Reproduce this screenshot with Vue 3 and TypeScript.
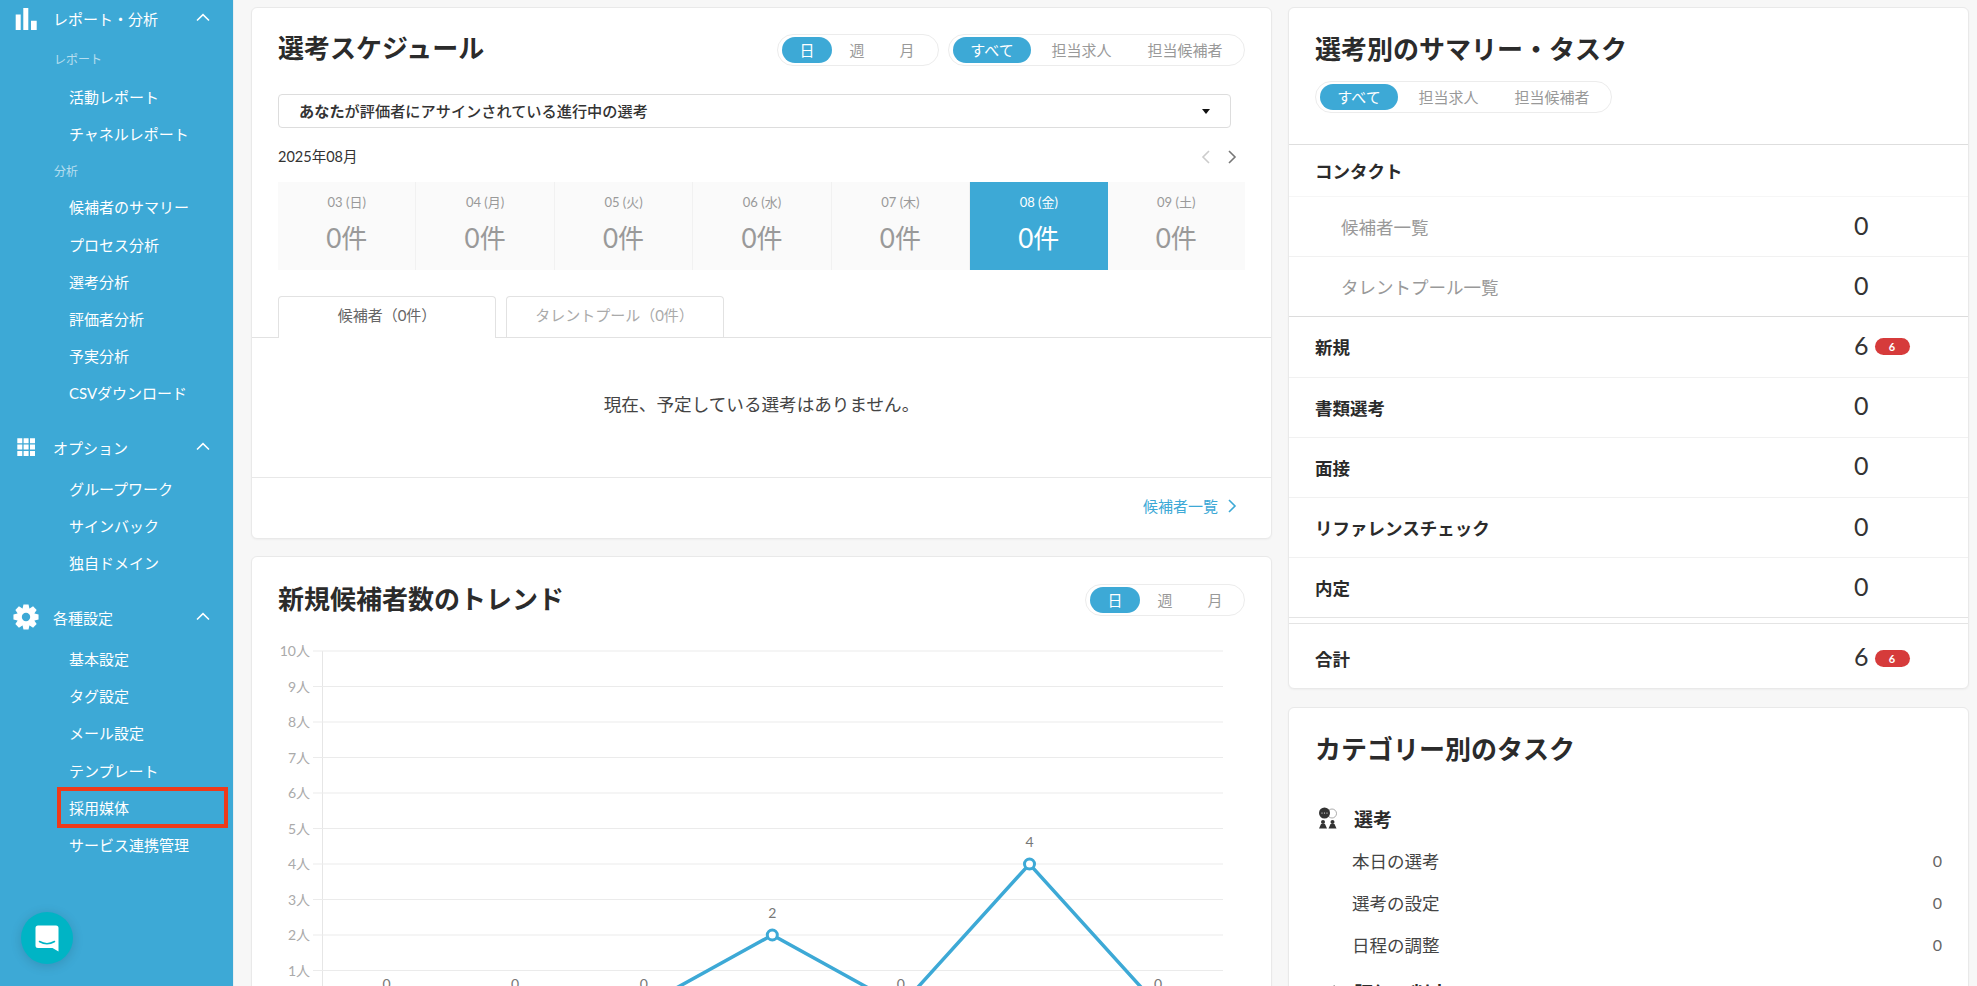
<script setup lang="ts">
interface Row { label: string; value: number; badge?: number }

const days = [
  { d: '03 (日)', n: '0件' }, { d: '04 (月)', n: '0件' }, { d: '05 (火)', n: '0件' },
  { d: '06 (水)', n: '0件' }, { d: '07 (木)', n: '0件' }, { d: '08 (金)', n: '0件', active: true },
  { d: '09 (土)', n: '0件' },
]
const analysis = ['候補者のサマリー', 'プロセス分析', '選考分析', '評価者分析', '予実分析', 'CSVダウンロード']
const options = ['グループワーク', 'サインバック', '独自ドメイン']
const settings = ['基本設定', 'タグ設定', 'メール設定', 'テンプレート', '採用媒体', 'サービス連携管理']
const stages: Row[] = [
  { label: '新規', value: 6, badge: 6 }, { label: '書類選考', value: 0 }, { label: '面接', value: 0 },
  { label: 'リファレンスチェック', value: 0 }, { label: '内定', value: 0 },
]
const tasks = [{ label: '本日の選考', v: 0 }, { label: '選考の設定', v: 0 }, { label: '日程の調整', v: 0 }]

// chart geometry, in the svg's own coordinates
const top = 34
const step = 35.5
const baseY = top + step * 10
const ticks = [10, 9, 8, 7, 6, 5, 4, 3, 2, 1].map((v) => ({ v, y: top + step * (10 - v) }))
const points = [0, 0, 0, 2, 0, 4, 0].map((v, i) => ({ v, x: 134.5 + i * 128.6, y: baseY - v * step }))
const linePath = points.map((p) => `${p.x},${p.y}`).join(' ')

const gearPts = (() => {
  const out: string[] = []
  const cx = 13, cy = 13
  for (let i = 0; i < 8; i++) {
    const a = (i * Math.PI) / 4 - Math.PI / 2
    const seq: [number, number][] = [[9.2, -0.38], [12.8, -0.2], [12.8, 0.2], [9.2, 0.38]]
    for (const [r, o] of seq) out.push(`${(cx + r * Math.cos(a + o)).toFixed(2)},${(cy + r * Math.sin(a + o)).toFixed(2)}`)
  }
  return out.join(' ')
})()
</script>

<template>
  <div class="page">
    <aside class="side">
      <div class="head">
        <svg class="ico" width="26" height="26" viewBox="0 0 26 26"><path d="M2.7 9.5h5v15.5h-5zM10.3 3h5v22h-5zM18 15.7h5.7V25H18z" fill="#fff"/></svg>
        <span>レポート・分析</span>
        <svg class="chev" width="14" height="9" viewBox="0 0 14 9"><path d="M1 7.5 7 1.7l6 5.8" fill="none" stroke="#fff" stroke-width="1.6"/></svg>
      </div>
      <div class="cap first">レポート</div>
      <div class="item">活動レポート</div>
      <div class="item">チャネルレポート</div>
      <div class="cap">分析</div>
      <div class="item" v-for="t in analysis" :key="t">{{ t }}</div>

      <div class="head gap">
        <svg class="ico" width="26" height="26" viewBox="0 0 26 26"><path d="M4.3 4.3h5v5h-5zM10.6 4.3h5v5h-5zM17 4.3h5v5h-5zM4.3 10.6h5v5h-5zM10.6 10.6h5v5h-5zM17 10.6h5v5h-5zM4.3 17h5v5h-5zM10.6 17h5v5h-5zM17 17h5v5h-5z" fill="#fff"/></svg>
        <span>オプション</span>
        <svg class="chev" width="14" height="9" viewBox="0 0 14 9"><path d="M1 7.5 7 1.7l6 5.8" fill="none" stroke="#fff" stroke-width="1.6"/></svg>
      </div>
      <div class="items">
        <div class="item" v-for="t in options" :key="t">{{ t }}</div>
      </div>

      <div class="head gap">
        <svg class="ico" width="26" height="26" viewBox="0 0 26 26"><polygon :points="gearPts" fill="#fff"/><circle cx="13" cy="13" r="4.2" fill="#3da9d6"/></svg>
        <span>各種設定</span>
        <svg class="chev" width="14" height="9" viewBox="0 0 14 9"><path d="M1 7.5 7 1.7l6 5.8" fill="none" stroke="#fff" stroke-width="1.6"/></svg>
      </div>
      <div class="items">
        <div class="item" :class="{ marked: t === '採用媒体' }" v-for="t in settings" :key="t">{{ t }}</div>
      </div>

      <div class="chat">
        <svg width="24" height="27" viewBox="0 0 24 27"><path d="M3 0.5h18a2.5 2.5 0 0 1 2.5 2.5v23.5l-6-3.5H3A2.5 2.5 0 0 1 0.5 20.500V3A2.500 2.500 0 0 1 3 0.500z" fill="#fff"/><path d="M4.500 16.500c4.500 2.600 10.500 2.600 15 0" fill="none" stroke="#00b4c5" stroke-width="1.500" stroke-linecap="round"/></svg>
      </div>
    </aside>

    <main class="main">
      <div class="left">
        <section class="card sched">
          <div class="title-row">
            <h2>選考スケジュール</h2>
            <div class="pills">
              <div class="pill period">
                <span class="on">日</span><span>週</span><span>月</span>
              </div>
              <div class="pill scope">
                <span class="on">すべて</span><span>担当求人</span><span>担当候補者</span>
              </div>
            </div>
          </div>
          <div class="select"><span><b>あなた</b>が評価者にアサインされている進行中の選考</span><i class="caret"></i></div>
          <div class="month">
            <span>2025年08月</span>
            <div class="nav">
              <svg width="12" height="16" viewBox="0 0 12 16"><path d="M9 2 3 8l6 6" fill="none" stroke="#ccc" stroke-width="1.600"/></svg>
              <svg width="12" height="16" viewBox="0 0 12 16"><path d="m3 2 6 6-6 6" fill="none" stroke="#777" stroke-width="1.600"/></svg>
            </div>
          </div>
          <div class="strip">
            <div class="day" :class="{ on: d.active }" v-for="d in days" :key="d.d">
              <small>{{ d.d }}</small>
              <strong>{{ d.n }}</strong>
            </div>
          </div>
          <div class="tabs">
            <div class="tab on">候補者（0件）</div>
            <div class="tab">タレントプール（0件）</div>
          </div>
          <div class="empty">現在、予定している選考はありません。</div>
          <div class="foot">
            <span>候補者一覧</span>
            <svg width="12" height="16" viewBox="0 0 12 16"><path d="m3 2 6 6-6 6" fill="none" stroke="#3da9d6" stroke-width="1.600"/></svg>
          </div>
        </section>

        <section class="card trend">
          <div class="title-row">
            <h2>新規候補者数のトレンド</h2>
            <div class="pill period">
              <span class="on">日</span><span>週</span><span>月</span>
            </div>
          </div>
          <svg class="chart" width="1019" height="430" viewBox="0 0 1019 430">
            <line x1="70.500" :y1="top" x2="70.500" :y2="baseY" stroke="#e6e6e6"/>
            <g v-for="t in ticks" :key="t.v">
              <line x1="61" :y1="t.y" x2="971" :y2="t.y" stroke="#ebebeb" stroke-width="1.200"/>
              <text x="58" :y="t.y + 5" text-anchor="end" class="tick">{{ t.v }}人</text>
            </g>
            <polyline :points="linePath" fill="none" stroke="#3da9d6" stroke-width="3.500"/>
            <g v-for="p in points" :key="p.x">
              <circle :cx="p.x" :cy="p.y" r="5" fill="#fff" stroke="#3da9d6" stroke-width="3"/>
              <text :x="p.x" :y="p.y - 17" text-anchor="middle" class="val">{{ p.v }}</text>
            </g>
          </svg>
        </section>
      </div>

      <div class="right">
        <section class="card summary">
          <div class="sum-head">
            <h2>選考別のサマリー・タスク</h2>
            <div class="pill scope">
              <span class="on">すべて</span><span>担当求人</span><span>担当候補者</span>
            </div>
          </div>
          <div class="contact">コンタクト</div>
          <div class="row sub">
            <span>候補者一覧</span><em>0</em>
          </div>
          <div class="row sub last">
            <span>タレントプール一覧</span><em>0</em>
          </div>
          <div class="row" v-for="r in stages" :key="r.label">
            <b>{{ r.label }}</b><em>{{ r.value }}</em><u v-if="r.badge">{{ r.badge }}</u>
          </div>
          <div class="spacer"></div>
          <div class="row total">
            <b>合計</b><em>6</em><u>6</u>
          </div>
        </section>

        <section class="card cats">
          <h2>カテゴリー別のタスク</h2>
          <div class="cat">
            <svg width="20" height="22" viewBox="0 0 20 22">
              <circle cx="14" cy="6.500" r="4.500" fill="#fff" stroke="#888" stroke-width="0.700"/>
              <circle cx="6.500" cy="6" r="5.500" fill="#333"/>
              <circle cx="4" cy="6" r="0.600" fill="#fff"/><circle cx="6.500" cy="6" r="0.600" fill="#fff"/><circle cx="9" cy="6" r="0.600" fill="#fff"/>
              <circle cx="5" cy="15" r="2" fill="#333"/><circle cx="14.500" cy="15" r="2" fill="#333"/>
              <path d="M1 21.500l2-4.500h4l2 4.500zM10.500 21.500l2-4.500h4l2 4.500z" fill="#333"/>
            </svg>
            <b>選考</b>
          </div>
          <div class="task" v-for="t in tasks" :key="t.label">
            <span>{{ t.label }}</span><em>{{ t.v }}</em>
          </div>
          <div class="cat next">
            <svg width="20" height="22" viewBox="0 0 20 22"><path d="M2 12l5 5L17 5" fill="none" stroke="#333" stroke-width="2.500"/></svg>
            <b>評価・判定</b>
          </div>
        </section>
      </div>
    </main>
  </div>
</template>

<style>
html, body { margin: 0; height: 986px; overflow: hidden; background: #f7f7f7; }
</style>

<style scoped>
.page {
  display: flex;
  height: 986px;
  overflow: hidden;
  font-family: "Lato", "Noto Sans CJK JP", sans-serif;
  color: #333;
  background: #f7f7f7;
}
.side {
  position: relative;
  flex: 0 0 234px;
  box-sizing: border-box;
  background: #3da9d6;
  border-right: 1px solid #e9eef1;
  color: #fff;
  font-size: 15px;
}
.head { display: flex; align-items: center; height: 36px; position: relative; padding-left: 53px; }
.head.gap { margin-top: 16.500px; }
.ico { position: absolute; left: 13px; top: 5px; }
.chev { position: absolute; left: 196px; top: 13px; }
.cap { height: 30px; line-height: 30px; font-size: 12px; padding-left: 54px; opacity: .62; margin-top: 4px; margin-bottom: 2px; }
.cap.first { margin-top: 9px; margin-bottom: 4px; }
.item { height: 37.200px; line-height: 37.200px; padding-left: 69px; position: relative; }
.items { margin-top: 6px; }
.marked::after {
  content: "";
  position: absolute;
  left: 57px;
  top: -3px;
  width: 171px;
  height: 41px;
  box-sizing: border-box;
  border: 4px solid #ee3a1a;
}
.chat {
  position: absolute;
  left: 21px;
  top: 912px;
  width: 52px;
  height: 52px;
  border-radius: 50%;
  background: #00b4c5;
  box-shadow: 0 2px 12px rgba(0, 0, 0, .14);
  display: flex;
  align-items: center;
  justify-content: center;
}
.main { flex: 1; display: flex; gap: 16px; padding: 7px 0 0 17px; min-width: 0; }
.left { flex: 0 0 1019px; display: flex; flex-direction: column; gap: 18px; }
.right { flex: 0 0 681px; display: flex; flex-direction: column; gap: 18px; }
.card {
  box-sizing: border-box;
  background: #fff;
  border: 1px solid #e9e9e9;
  border-radius: 6px;
  box-shadow: 0 1px 2px rgba(0, 0, 0, .04);
}
h2 { margin: 0; font-size: 26px; font-weight: 700; color: #2b2b2b; line-height: 36px; }
.title-row { display: flex; align-items: center; justify-content: space-between; padding: 24px 26px 0 26px; }
.sched h2 { margin-top: -2px; }
.pills { display: flex; gap: 9px; margin-top: 1px; }
.pill {
  box-sizing: border-box;
  display: flex;
  align-items: center;
  height: 32px;
  padding: 0 4px;
  border: 1px solid #ececec;
  border-radius: 16px;
  font-size: 15px;
  color: #999;
  background: #fff;
}
.pill span { text-align: center; line-height: 26px; height: 26px; border-radius: 13px; }
.pill span.on { background: #3da9d6; color: #fff; }
.period { width: 162px; }
.period span { width: 50px; }
.scope { width: 297px; }
.scope span:nth-child(1) { width: 78px; }
.scope span:nth-child(2) { width: 101px; }
.scope span:nth-child(3) { width: 106px; }
.trend .period { width: 160px; }
.sched { height: 532px; }
.select {
  box-sizing: border-box;
  margin: 28px 0 0 26px;
  width: 953px;
  height: 34px;
  border: 1px solid #ddd;
  border-radius: 4px;
  display: flex;
  align-items: center;
  justify-content: space-between;
  padding: 0 20px 2px 20px;
  font-size: 15.200px;
  font-weight: 500;
}
.select b { font-weight: 700; }
.caret { border-left: 4px solid transparent; border-right: 4px solid transparent; border-top: 5px solid #111; margin-top: 2px; }
.month {
  display: flex;
  justify-content: space-between;
  align-items: center;
  height: 24px;
  margin: 17px 26px 0 26px;
  font-size: 14.500px;
}
.month > span { margin-top: -4px; }
.nav { display: flex; gap: 14px; margin-right: 7px; }
.strip { display: flex; margin: 13px 26px 0 26px; height: 88px; }
.day {
  flex: 1;
  background: #fafafa;
  border-right: 1px solid #f1f1f1;
  color: #999;
  text-align: center;
  display: flex;
  flex-direction: column;
  align-items: center;
}
.day:last-child { border-right: 0; }
.day small { font-size: 13px; line-height: 18px; margin-top: 11px; }
.day strong { font-size: 26px; font-weight: 400; line-height: 36px; margin-top: 9px; }
.day.on { background: #3da9d6; color: #fff; border-right: 0; }
.tabs { display: flex; gap: 9.500px; margin-top: 26px; padding-left: 26px; border-bottom: 1px solid #e2e2e2; height: 41px; }
.tab {
  box-sizing: border-box;
  width: 218px;
  height: 41px;
  border: 1px solid #e2e2e2;
  border-bottom: 0;
  border-radius: 4px 4px 0 0;
  text-align: center;
  line-height: 37px;
  font-size: 15px;
  color: #aaa;
}
.tab.on { height: 42px; background: #fff; color: #666; }
.empty { height: 140px; display: flex; align-items: center; justify-content: center; padding-bottom: 8px; font-size: 17.600px; color: #444; border-bottom: 1px solid #e8e8e8; box-sizing: border-box; }
.foot { display: flex; align-items: center; justify-content: flex-end; gap: 8px; box-sizing: border-box; height: 60px; padding: 0 33px 5px 0; font-size: 15px; color: #3da9d6; }
.trend { height: 500px; margin-top: -1px; }
.trend .title-row { padding-top: 27px; }
.trend h2 { line-height: 32px; margin-top: -2px; }
.chart { display: block; margin-top: 1px; }
.tick { font-size: 14px; fill: #aaa; font-family: "Lato", "Noto Sans CJK JP", sans-serif; }
.val { font-size: 14px; fill: #777; font-family: "Lato", sans-serif; }
.summary { height: 682px; }
.sum-head { padding: 23px 26px 0; height: 137px; box-sizing: border-box; border-bottom: 1px solid #dedede; }
.sum-head .pill { margin-top: 14px; }
.contact { height: 52px; line-height: 54px; padding-left: 26px; font-size: 17.500px; font-weight: 700; color: #2b2b2b; border-bottom: 1px solid #f6f6f6; box-sizing: border-box; }
.row {
  box-sizing: border-box;
  display: grid;
  grid-template-columns: 1fr auto 35px;
  column-gap: 6px;
  align-items: center;
  height: 60.200px;
  padding: 0 58.500px 0 26px;
  border-bottom: 1px solid #f1f1f1;
}
.row b { font-size: 17.500px; font-weight: 700; color: #2b2b2b; }
.row em { font-style: normal; font-size: 25px; font-weight: 400; color: #333; line-height: 1; margin-top: -3px; }
.row u {
  text-decoration: none;
  height: 17px;
  line-height: 17px;
  border-radius: 9px;
  background: #d63b3b;
  color: #fff;
  font-size: 11px;
  font-weight: 700;
  text-align: center;
}
.sub { padding-left: 52px; }
.sub span { font-size: 17.500px; color: #999; }
.sub.last { border-bottom-color: #dcdcdc; }
.spacer { height: 7px; border-top: 1px solid #e4e4e4; margin-top: -1px; border-bottom: 1px solid #e4e4e4; box-sizing: border-box; }
.total { border-bottom: 0; height: 64px; padding-top: 4px; }
.cats { height: 340px; padding: 23px 26px 0; }
.cat { display: flex; align-items: center; gap: 16px; margin-top: 39px; height: 24px; margin-left: 4px; }
.cat svg { flex: none; margin-left: -1px; }
.cat b { font-size: 19px; font-weight: 700; color: #2b2b2b; }
.cat.next { margin-top: 15px; }
.task {
  display: flex;
  justify-content: space-between;
  align-items: center;
  height: 42px;
  padding-left: 37px;
  padding-right: 0;
  font-size: 17.500px;
  color: #444;
}
.cat + .task { margin-top: 9px; }
.task em { font-style: normal; font-size: 16px; color: #666; }
</style>
